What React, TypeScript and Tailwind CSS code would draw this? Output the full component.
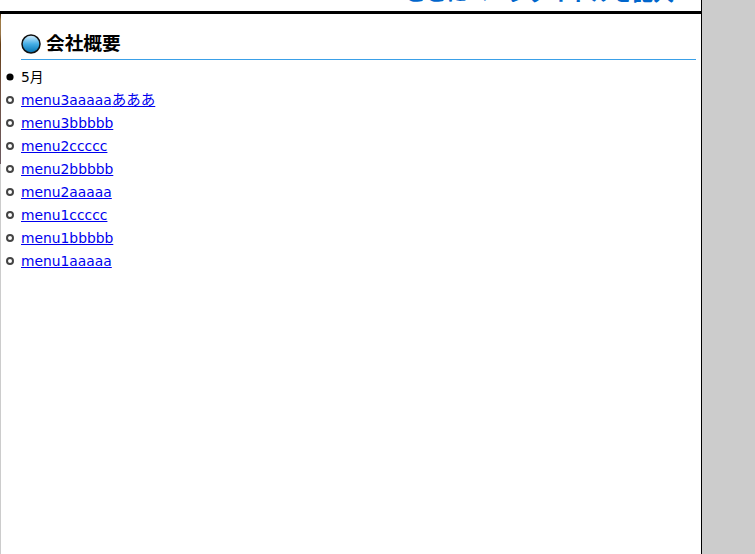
import type { ReactNode } from "react";

export default function App() {
  return (
    <div className="flex h-[554px] w-[755px] overflow-hidden bg-[#cccccc] font-['DejaVu_Sans','Noto_Sans_CJK_JP',sans-serif] text-[13.85px]">
      <div className="flex h-full w-[702px] flex-col border-r border-black bg-white">
        <div className="h-[14px] shrink-0 overflow-hidden border-b-[3px] border-black">
          <div className="-mt-[20px] pr-[27px] text-right font-['Noto_Sans_CJK_JP',sans-serif] text-[20.75px] leading-[24px] font-bold text-[#0066cc]">ここにページタイトルを記入</div>
        </div>
        <div className="flex min-h-0 flex-1">
          <div className="flex w-px shrink-0 flex-col bg-[#cccccc]">
            <div className="h-[150px] bg-[linear-gradient(to_bottom,#4a2c10_0px,#a07c44_6px,#98764a_20px,#643c12_30px,#705040_70px,#6b5a60_150px)]" />
          </div>
          <div className="min-w-0 flex-1 pr-[5px]">
            <div className="mt-[16px] ml-[20px] flex h-[30px] items-center gap-[5px] border-b border-[#3aa0e8] pb-[2px]">
              <svg width="20" height="20" viewBox="0 0 20 20">
                <defs>
                  <linearGradient id="g" x1="0" y1="0" x2="0" y2="1">
                    <stop offset="0" stopColor="#d8f0ff" />
                    <stop offset="0.5" stopColor="#45aee6" />
                    <stop offset="1" stopColor="#0070b0" />
                  </linearGradient>
                </defs>
                <circle cx="10" cy="10" r="9" fill="url(#g)" stroke="#111" strokeWidth="1.5" />
              </svg>
              <span className="-mt-[3px] font-['Noto_Sans_CJK_JP',sans-serif] text-[18.7px] leading-[24px] font-bold text-black">会社概要</span>
            </div>
            <ul className="mt-[6px] list-none">
              <Item filled>5月</Item>
              <Item>
                <a href="#" className="text-[#0000ee] underline">
                  menu3aaaaa<span className="text-[14.5px]">あああ</span>
                </a>
              </Item>
              {["menu3bbbbb", "menu2ccccc", "menu2bbbbb", "menu2aaaaa", "menu1ccccc", "menu1bbbbb", "menu1aaaaa"].map((t) => (
                <Item key={t}>
                  <a href="#" className="text-[#0000ee] underline">{t}</a>
                </Item>
              ))}
            </ul>
          </div>
        </div>
      </div>
    </div>
  );
}

function Item({ filled, children }: { filled?: boolean; children: ReactNode }) {
  return (
    <li className="flex h-[23px] items-center">
      <span className={`-mt-[1px] ml-[5px] h-[8px] w-[8px] rounded-full border-2 border-[#444444] ${filled ? "scale-90 border-black bg-black" : "bg-white"}`} />
      <span className="ml-[7px]">{children}</span>
    </li>
  );
}
